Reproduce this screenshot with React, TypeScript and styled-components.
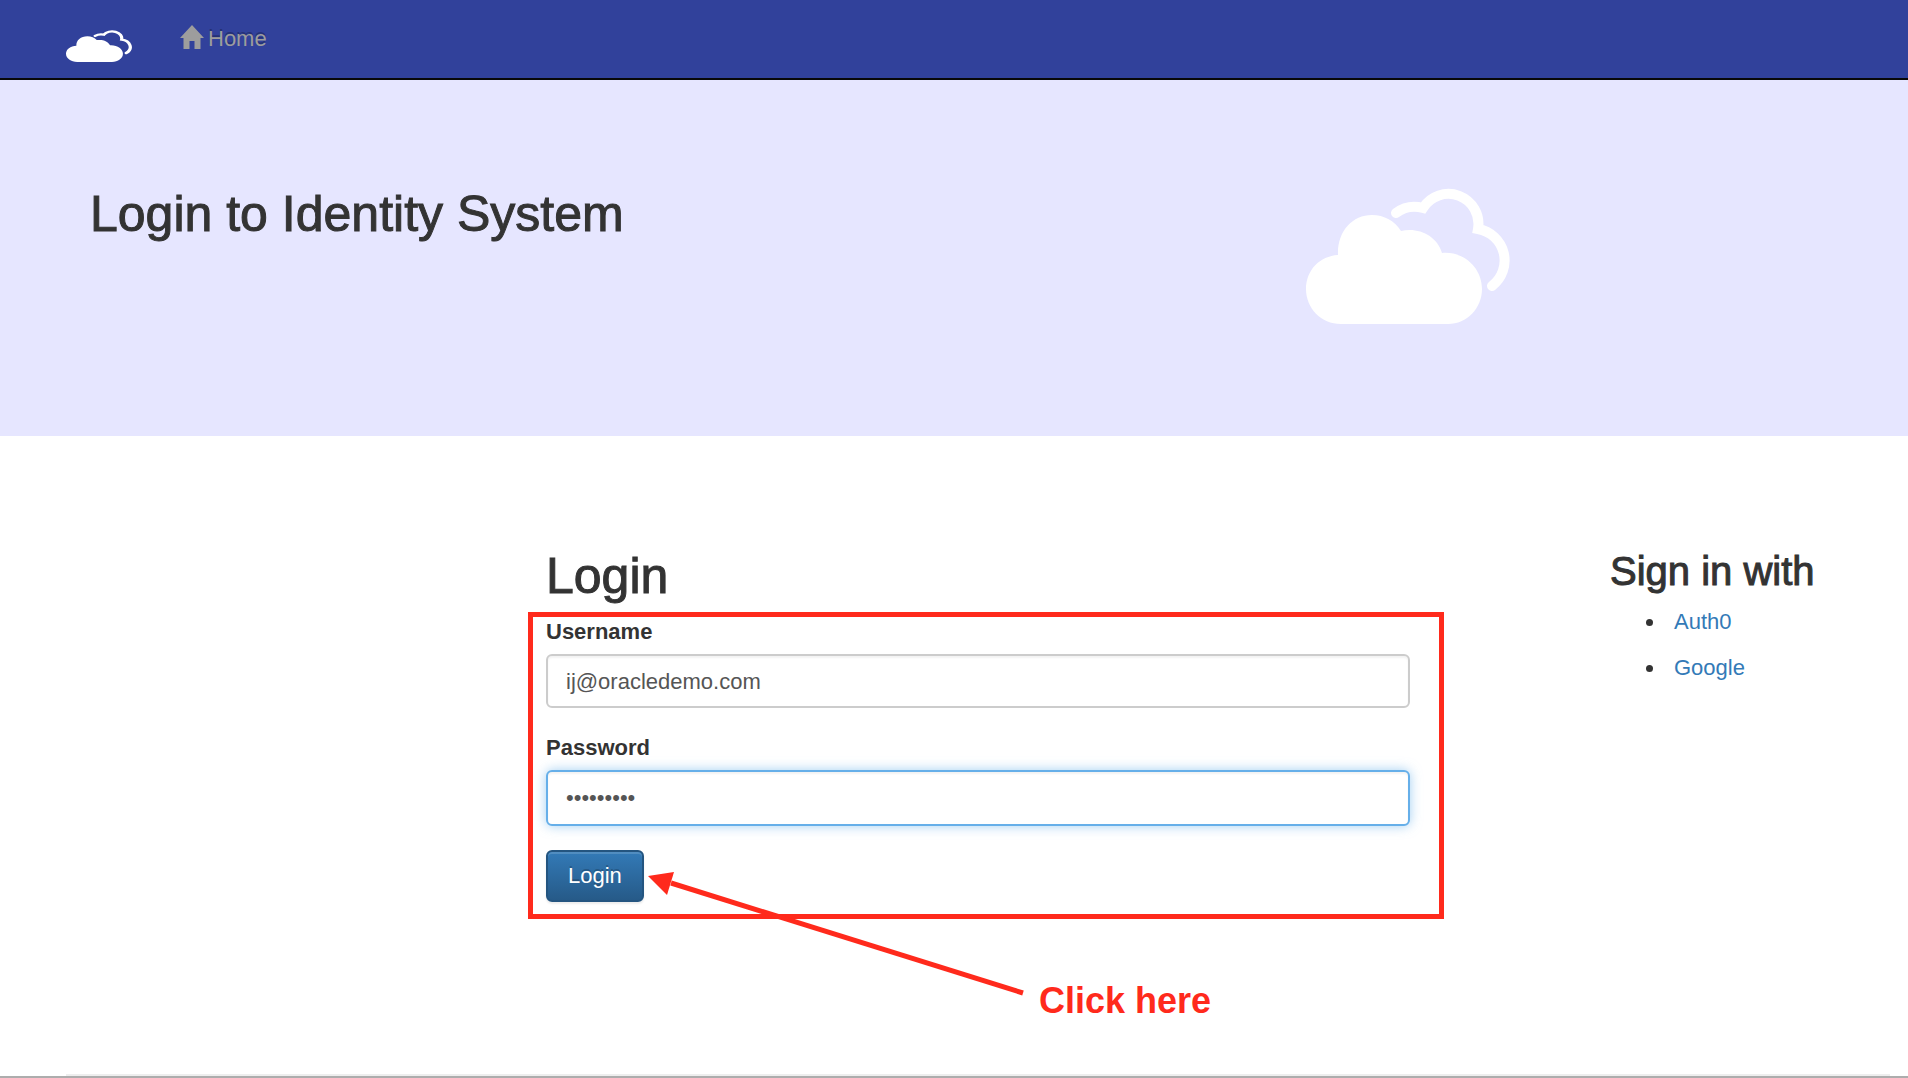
import React from "react";
import styled, { createGlobalStyle, css } from "styled-components";

const GlobalStyle = createGlobalStyle`
  *, *::before, *::after { box-sizing: border-box; }
  html, body, #root { height: 100%; }
  body {
    margin: 0;
    background: #fff;
    color: #333;
    font: 22px/32px "Liberation Sans", Arial, sans-serif;
  }
`;

const red = "#ff2a1c";

const Page = styled.div`
  min-height: 100%;
  display: flex;
  flex-direction: column;
  border-bottom: 2px solid #adadad;
`;

const NavBar = styled.nav`
  display: flex;
  align-items: center;
  gap: 48px;
  height: 80px;
  padding: 0 66px;
  background: #31419b;
  border-bottom: 2px solid #080808;
`;

const Brand = styled.a`
  display: flex;
  padding-top: 14px;
`;

const NavLink = styled.a`
  display: flex;
  align-items: center;
  gap: 4px;
  color: #9d9d9d;
  text-decoration: none;
  text-shadow: 0 -2px 0 rgba(0, 0, 0, 0.25);
`;

const HomeIcon = styled.svg`
  width: 24px;
  height: 24px;
  margin-bottom: 4px;
`;

const Row = styled.div`
  display: grid;
  grid-template-columns: repeat(12, minmax(0, 1fr));
  margin: 0 18px 0 66px;
`;

const Column = styled.div<{ $start: number; $span: number }>`
  grid-column: ${(p) => p.$start} / span ${(p) => p.$span};
  padding: 0 24px;
`;

const Hero = styled.header`
  height: 356px;
  padding-top: 108px;
  background: #e6e6ff;
`;

const Title = styled.h1<{ $small?: boolean }>`
  margin: 0;
  font-weight: 500;
  font-size: ${(p) => (p.$small ? 40 : 50)}px;
  line-height: ${(p) => (p.$small ? 42 : 52)}px;
  -webkit-text-stroke: 1px currentColor;
`;

const Main = styled.main`
  flex: 1;
  padding-top: 114px;
`;

const LoginForm = styled.form`
  position: relative;
  padding-top: 14px;
`;

const Field = styled.div`
  display: flex;
  flex-direction: column;
  gap: 6px;
  margin-bottom: 24px;
`;

const Label = styled.label`
  font-weight: 700;
`;

const Input = styled.input<{ $active?: boolean }>`
  width: 100%;
  height: 54px;
  padding: 2px 18px 0;
  border: 2px solid #ccc;
  border-radius: 6px;
  outline: none;
  background: #fff;
  color: #555;
  font: inherit;
  box-shadow: inset 0 2px 2px rgba(0, 0, 0, 0.05);
  ${(p) =>
    p.$active &&
    css`
      height: 56px;
      padding-top: 0;
      border-color: #66afe9;
      box-shadow: inset 0 2px 2px rgba(0, 0, 0, 0.05), 0 0 12px rgba(102, 175, 233, 0.6);
    `}
`;

const LoginButton = styled.button`
  height: 52px;
  padding: 0 20px;
  border: 2px solid #245580;
  border-radius: 6px;
  background: linear-gradient(#337ab7, #265a88);
  color: #fff;
  font: inherit;
  text-shadow: 0 -2px 0 rgba(0, 0, 0, 0.2);
  box-shadow: inset 0 2px 0 rgba(255, 255, 255, 0.15), 0 2px 2px rgba(0, 0, 0, 0.08);
`;

const Highlight = styled.div`
  position: absolute;
  inset: 10px -34px -17px -18px;
  border: 5px solid ${red};
  pointer-events: none;
`;

const Arrow = styled.svg`
  position: absolute;
  left: 100px;
  bottom: -100px;
  width: 380px;
  height: 128px;
  pointer-events: none;
`;

const Callout = styled.p`
  position: absolute;
  left: 493px;
  top: 379px;
  margin: 0;
  color: ${red};
  font-weight: 700;
  font-size: 36px;
  line-height: 40px;
  white-space: nowrap;
`;

const Providers = styled.ul`
  display: flex;
  flex-direction: column;
  gap: 14px;
  margin: 14px 0 0;
  padding-left: 56px;
`;

const Provider = styled.li`
  padding-left: 8px;
`;

const ProviderLink = styled.a`
  color: #337ab7;
  text-decoration: none;
`;

const FooterRule = styled.hr`
  width: calc(100% - 84px);
  margin: 0 18px 0 66px;
  border: 0;
  border-top: 2px solid #eee;
`;

function Clouds({ width, height }: { width: number; height: number }) {
  return (
    <svg width={width} height={height} viewBox="0 0 204 136" preserveAspectRatio="none" aria-hidden="true">
      <path
        fill="#fff"
        d="M35 136C15 136 0 120 0 101C0 82 14 68 32 67C31 44 46 27 66 27C78 27 89 33 95 43C113 39 131 48 136 65C158 63 176 80 176 101C176 120 161 136 142 136Z"
      />
      <path
        fill="none"
        stroke="#fff"
        strokeWidth="10"
        strokeLinecap="round"
        d="M90 25Q102 16 117 20A30 30 0 0 1 172 41A32 32 0 0 1 186 98"
      />
    </svg>
  );
}

export default function App() {
  return (
    <Page>
      <GlobalStyle />
      <NavBar>
        <Brand href="#" aria-label="Identity System">
          <Clouds width={66} height={32} />
        </Brand>
        <NavLink href="#">
          <HomeIcon viewBox="0 0 24 24" aria-hidden="true">
            <path fill="currentColor" d="M12 0 24 13H20.500V24H14.500V16H9.500V24H3.500V13H0Z" />
          </HomeIcon>
          Home
        </NavLink>
      </NavBar>
      <Hero>
        <Row>
          <Column $start={1} $span={8}>
            <Title>Login to Identity System</Title>
          </Column>
          <Column $start={9} $span={4}>
            <Clouds width={204} height={136} />
          </Column>
        </Row>
      </Hero>
      <Main>
        <Row>
          <Column $start={4} $span={6}>
            <Title as="h2">Login</Title>
            <LoginForm onSubmit={(e: React.FormEvent) => e.preventDefault()}>
              <Field>
                <Label htmlFor="username">Username</Label>
                <Input id="username" defaultValue="ij@oracledemo.com" />
              </Field>
              <Field>
                <Label htmlFor="password">Password</Label>
                <Input id="password" type="password" defaultValue="password1" $active />
              </Field>
              <LoginButton type="submit">Login</LoginButton>
              <Highlight />
              <Arrow viewBox="0 0 380 128" overflow="visible">
                <path d="M25 9 377 119" stroke={red} strokeWidth="5" fill="none" />
                <path d="M2 2 28 -2 21 21Z" fill={red} />
              </Arrow>
              <Callout>Click here</Callout>
            </LoginForm>
          </Column>
          <Column $start={11} $span={2}>
            <Title as="h3" $small>Sign in with</Title>
            <Providers>
              <Provider><ProviderLink href="#">Auth0</ProviderLink></Provider>
              <Provider><ProviderLink href="#">Google</ProviderLink></Provider>
            </Providers>
          </Column>
        </Row>
      </Main>
      <FooterRule />
    </Page>
  );
}
